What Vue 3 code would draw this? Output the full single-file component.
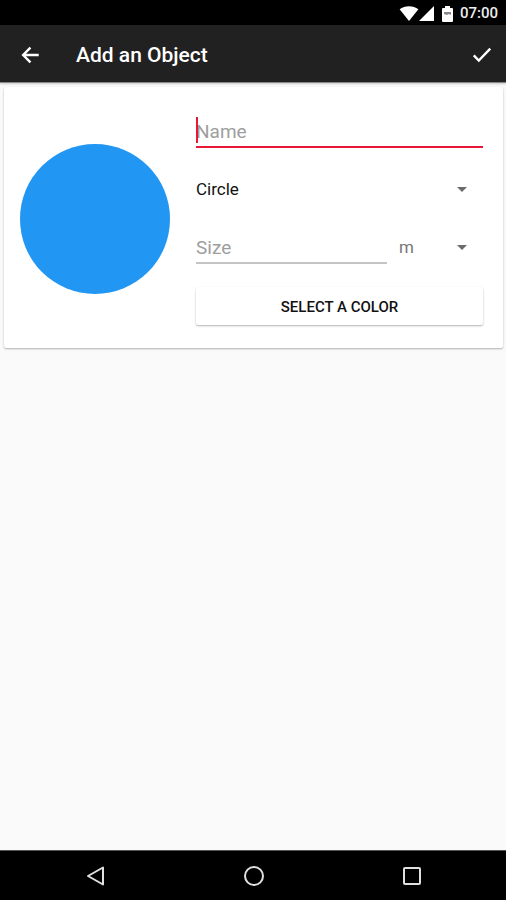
<template>
  <div class="screen">
    <div class="status-bar">
      <svg class="wifi-icon" viewBox="0 0 20 16">
        <path d="M0 3.5 C5.5 -0.8 14.5 -0.8 20 3.5 L10 16 Z" />
      </svg>
      <svg class="signal-icon" viewBox="0 0 16 16">
        <path d="M16 0 V16 H0 Z" />
      </svg>
      <svg class="battery-icon" viewBox="0 0 11 16">
        <path d="M3 0 H8 V2 H10 Q11 2 11 3 V15 Q11 16 10 16 H1 Q0 16 0 15 V3 Q0 2 1 2 H3 Z" />
        <path d="M2 6 H9 V9 L7 8 L5 9 L2 8 Z" class="battery-level" />
      </svg>
      <span class="clock">07:00</span>
    </div>

    <header class="app-bar">
      <button class="icon-btn" type="button" aria-label="Back">
        <svg viewBox="0 0 24 24">
          <path d="M21.5 12 H4.5 M12.5 4 L4.5 12 L12.5 20" />
        </svg>
      </button>
      <h1 class="title">Add an Object</h1>
      <button class="icon-btn" type="button" aria-label="Save">
        <svg viewBox="0 0 24 24">
          <path d="M3 12.5 L8.5 18 L21 5" />
        </svg>
      </button>
    </header>

    <main class="content">
      <form class="card" @submit.prevent>
        <div class="preview">
          <svg viewBox="0 0 150 150">
            <circle v-if="shape === 'Circle'" cx="75" cy="75" r="75" :fill="color" />
            <rect v-else width="150" height="150" :fill="color" />
          </svg>
        </div>

        <div class="fields">
          <label class="field name-field" :class="{ empty: !name }">
            <input v-model="name" class="text-input active" type="text" placeholder="Name" aria-label="Name" />
          </label>

          <label class="field">
            <select v-model="shape" class="select" aria-label="Shape">
              <option v-for="item in shapes" :key="item">{{ item }}</option>
            </select>
            <svg class="arrow" viewBox="0 0 10 5"><path d="M0 0 H10 L5 5 Z" /></svg>
          </label>

          <div class="size-row">
            <label class="field size-field">
              <input v-model="size" class="text-input" type="text" inputmode="decimal" placeholder="Size" aria-label="Size" />
            </label>
            <label class="field unit-field">
              <select v-model="unit" class="select unit" aria-label="Unit">
                <option v-for="item in units" :key="item">{{ item }}</option>
              </select>
              <svg class="arrow" viewBox="0 0 10 5"><path d="M0 0 H10 L5 5 Z" /></svg>
            </label>
          </div>

          <button class="color-btn" type="button" @click="nextColor()">SELECT A COLOR</button>
        </div>
      </form>
    </main>

    <nav class="nav-bar">
      <button class="nav-btn" type="button" aria-label="Navigate back">
        <svg viewBox="0 0 20 20"><path d="M17 1.5 V18.5 L2 10 Z" /></svg>
      </button>
      <button class="nav-btn" type="button" aria-label="Home">
        <svg viewBox="0 0 20 20"><circle cx="10" cy="10" r="9" /></svg>
      </button>
      <button class="nav-btn" type="button" aria-label="Recent apps">
        <svg viewBox="0 0 20 20"><rect x="2" y="2" width="16" height="16" rx="1" /></svg>
      </button>
    </nav>
  </div>
</template>

<script setup>
import { ref } from "vue";

const shapes = ["Circle", "Square"];
const units = ["m", "km"];
const colors = ["#2196f3", "#4caf50", "#f44336"];

const name = ref("");
const shape = ref("Circle");
const size = ref("");
const unit = ref("m");
const color = ref(colors[0]);

const nextColor = () => {
  color.value = colors[(colors.indexOf(color.value) + 1) % colors.length];
};
</script>

<style>
body {
  margin: 0;
  background: #fafafa;
}
</style>

<style scoped>
.screen {
  min-height: 100vh;
  display: flex;
  flex-direction: column;
  background: #fafafa;
  font-family: Roboto, "Liberation Sans", sans-serif;
}

button,
input,
select {
  font-family: inherit;
  margin: 0;
  border: none;
  border-radius: 0;
  background: none;
  outline: none;
}

button {
  cursor: pointer;
}

.status-bar {
  height: 25px;
  padding: 2px 8px 0;
  box-sizing: border-box;
  display: flex;
  align-items: center;
  justify-content: flex-end;
  background: #000;
  color: #eee;
  fill: #fff;
}

.wifi-icon {
  width: 20px;
  height: 15px;
}

.signal-icon {
  width: 15px;
  height: 15px;
  margin-right: 8px;
}

.battery-icon {
  width: 11px;
  height: 16px;
  margin-right: 7px;
}

.battery-level {
  fill: #888;
}

.clock {
  font-size: 15px;
  font-weight: 500;
  line-height: 23px;
}

.app-bar {
  height: 58px;
  padding: 2px 12px 0;
  display: flex;
  align-items: center;
  background: #212121;
  color: #fff;
  border-bottom: 1px solid #888;
  box-sizing: border-box;
  box-shadow: 0 1px 2px rgba(0, 0, 0, 0.2);
}

.icon-btn {
  width: 36px;
  height: 36px;
  padding: 7px;
}

.icon-btn:last-child {
  margin-right: -6px;
}

.icon-btn svg {
  display: block;
  width: 22px;
  height: 22px;
  fill: none;
  stroke: #fff;
  stroke-width: 2.6;
}

.title {
  flex: 1;
  margin: 0 0 0 28px;
  font-size: 21px;
  font-weight: 500;
  line-height: 28px;
}

.content {
  flex: 1;
  padding: 4px 3px 4px 4px;
}

.card {
  display: flex;
  align-items: center;
  gap: 26px;
  padding: 25px 20px 23px 16px;
  background: #fff;
  border-radius: 2px;
  box-shadow: 0 1px 2px rgba(0, 0, 0, 0.3);
}

.preview {
  width: 150px;
  flex-shrink: 0;
}

.preview svg {
  display: block;
  width: 100%;
}

.fields {
  flex: 1;
  min-width: 0;
  display: flex;
  flex-direction: column;
  gap: 22px;
}

.field {
  display: block;
  position: relative;
  min-width: 0;
}

.text-input {
  display: block;
  width: 100%;
  height: 36px;
  padding: 4px 0 0;
  box-sizing: border-box;
  border-bottom: 2px solid #c4c4c4;
  font-size: 19px;
  color: #212121;
}

.text-input::placeholder {
  color: #9e9e9e;
}

.text-input.active {
  border-bottom-color: #ea1636;
  caret-color: #ea1636;
}

.name-field.empty::before {
  content: "";
  position: absolute;
  left: 0;
  top: 5px;
  width: 2px;
  height: 26px;
  background: #ea1636;
}

.select {
  display: block;
  width: 100%;
  height: 36px;
  padding: 2px 32px 0 0;
  appearance: none;
  font-size: 17px;
  color: #111;
}

.select.unit {
  color: #757575;
}

.arrow {
  position: absolute;
  right: 16px;
  top: 17px;
  width: 10px;
  height: 5px;
  fill: #6b6b6b;
  pointer-events: none;
}

.size-row {
  display: flex;
  gap: 12px;
}

.size-field {
  flex: 1;
}

.unit-field {
  width: 84px;
}

.color-btn {
  height: 38px;
  margin-top: 1px;
  padding: 2px 8px 0;
  border-radius: 2px;
  background: #fff;
  box-shadow: 0 1px 2px rgba(0, 0, 0, 0.3);
  font-size: 15px;
  font-weight: 500;
  color: #111;
}

.color-btn:hover {
  background: #f5f5f5;
}

.nav-bar {
  height: 49px;
  padding: 0 15px 0 17px;
  display: flex;
  align-items: center;
  background: #000;
  border-top: 1px solid #555;
}

.nav-btn {
  flex: 1;
  height: 48px;
  padding: 0;
  display: flex;
  align-items: center;
  justify-content: center;
}

.nav-btn svg {
  width: 20px;
  height: 20px;
  fill: none;
  stroke: #e0e0e0;
  stroke-width: 2;
  stroke-linejoin: round;
}
</style>
